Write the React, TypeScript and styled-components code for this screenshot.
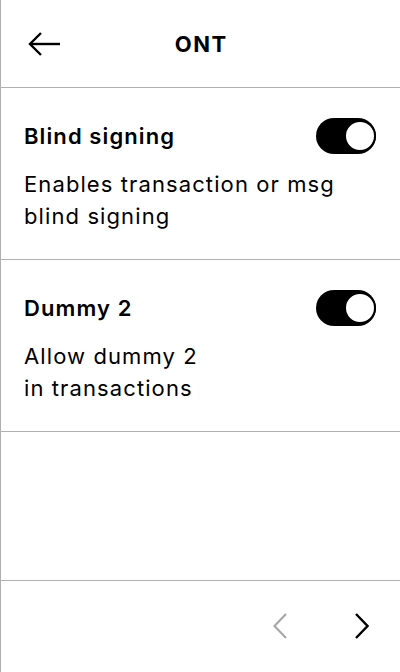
import { createGlobalStyle } from 'styled-components';
import styled from 'styled-components';

const GlobalStyle = createGlobalStyle`
  html, body {
    margin: 0;
    padding: 0;
    background: #fff;
  }
  body {
    font-family: Inter, 'Noto Sans', sans-serif;
    color: #000;
  }
`;

const Screen = styled.div`
  width: 400px;
  height: 672px;
  box-sizing: border-box;
  border-left: 1px solid #b0b0b0;
  display: flex;
  flex-direction: column;
  background: #fff;
`;

const Header = styled.header`
  height: 88px;
  box-sizing: border-box;
  border-bottom: 1px solid #b0b0b0;
  display: grid;
  grid-template-columns: 60px 1fr 60px;
  align-items: center;
  padding: 0 27px;
`;

const Title = styled.h1`
  margin: 0;
  font-size: 22px;
  font-weight: 700;
  text-align: center;
  letter-spacing: 1.5px;
  padding-left: 1.5px;
`;

const IconButton = styled.button<{ $muted?: boolean }>`
  background: none;
  border: none;
  padding: 0;
  display: flex;
  align-items: center;
  cursor: pointer;
  color: ${(p) => (p.$muted ? '#a8a8a8' : '#000')};
`;

const Setting = styled.section`
  height: 172px;
  box-sizing: border-box;
  border-bottom: 1px solid #b0b0b0;
  padding: 30px 24px 0 23px;
`;

const SettingHead = styled.div`
  display: flex;
  justify-content: space-between;
  align-items: center;
`;

const SettingName = styled.h2`
  margin: 0;
  font-size: 22px;
  font-weight: 600;
  letter-spacing: 1.1px;
`;

const Description = styled.p`
  margin: 14px 0 0;
  font-size: 22px;
  line-height: 32px;
  font-weight: 400;
  letter-spacing: 1.1px;
  white-space: pre-line;
`;

const Track = styled.div`
  width: 60px;
  height: 36px;
  border-radius: 18px;
  background: #000;
  position: relative;
  flex-shrink: 0;
`;

const Knob = styled.div`
  position: absolute;
  right: 0;
  top: 2px;
  width: 28px;
  height: 28px;
  border-radius: 50%;
  background: #fff;
  border: 2px solid #000;
  box-sizing: content-box;
`;

const Spacer = styled.div`
  flex: 1;
`;

const Footer = styled.footer`
  height: 92px;
  box-sizing: border-box;
  border-top: 1px solid #b0b0b0;
  display: flex;
  justify-content: flex-end;
  align-items: center;
  gap: 68px;
  padding: 0 31px 2px 0;
`;

const Toggle = () => (
  <Track>
    <Knob />
  </Track>
);

const settings = [
  { name: 'Blind signing', desc: 'Enables transaction or msg\nblind signing' },
  { name: 'Dummy 2', desc: 'Allow dummy 2\nin transactions' },
];

export default function App() {
  return (
    <>
      <GlobalStyle />
      <Screen>
        <Header>
          <IconButton aria-label="Back">
            <svg width="34" height="26" viewBox="0 0 34 26" fill="none" stroke="currentColor" strokeWidth="2.4">
              <path d="M2 13H32" />
              <path d="M13 2L2 13L13 24" />
            </svg>
          </IconButton>
          <Title>ONT</Title>
          <span />
        </Header>
        {settings.map((s) => (
          <Setting key={s.name}>
            <SettingHead>
              <SettingName>{s.name}</SettingName>
              <Toggle />
            </SettingHead>
            <Description>{s.desc}</Description>
          </Setting>
        ))}
        <Spacer />
        <Footer>
          <IconButton $muted aria-label="Previous">
            <svg width="14" height="28" viewBox="0 0 14 28" fill="none" stroke="currentColor" strokeWidth="2.2">
              <path d="M13 2L1.5 14L13 26" />
            </svg>
          </IconButton>
          <IconButton aria-label="Next">
            <svg width="14" height="28" viewBox="0 0 14 28" fill="none" stroke="currentColor" strokeWidth="2.4">
              <path d="M1 2L12.5 14L1 26" />
            </svg>
          </IconButton>
        </Footer>
      </Screen>
    </>
  );
}
